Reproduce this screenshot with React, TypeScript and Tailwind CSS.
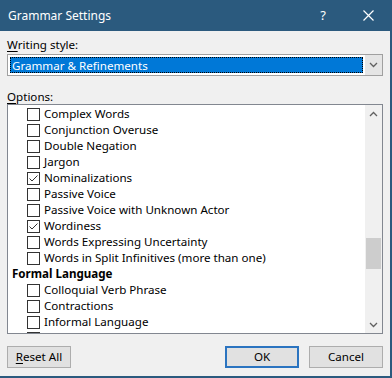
import React from 'react';

type Row = { label: string; checked?: boolean; heading?: boolean };

const rows: Row[] = [
  { label: 'Complex Words' },
  { label: 'Conjunction Overuse' },
  { label: 'Double Negation' },
  { label: 'Jargon' },
  { label: 'Nominalizations', checked: true },
  { label: 'Passive Voice' },
  { label: 'Passive Voice with Unknown Actor' },
  { label: 'Wordiness', checked: true },
  { label: 'Words Expressing Uncertainty' },
  { label: 'Words in Split Infinitives (more than one)' },
  { label: 'Formal Language', heading: true },
  { label: 'Colloquial Verb Phrase' },
  { label: 'Contractions' },
  { label: 'Informal Language' },
  { label: '' },
];

const Check: React.FC<{ checked?: boolean }> = ({ checked }) => (
  <span className="w-[13px] h-[13px] border border-[#333] bg-white flex items-center justify-center shrink-0">
    {checked && (
      <svg width="11" height="11" viewBox="0 0 11 11" fill="none">
        <path d="M1.5 5.5 L4 8 L9.5 2.5" stroke="#333" strokeWidth="1" />
      </svg>
    )}
  </span>
);

const Chevron: React.FC<{ up?: boolean }> = ({ up }) => (
  <svg width="9" height="6" viewBox="0 0 9 6" fill="none">
    <path d={up ? 'M1 5 L4.5 1.5 L8 5' : 'M1 1 L4.5 4.5 L8 1'} stroke="#606060" strokeWidth="1.3" />
  </svg>
);

const App: React.FC = () => {
  return (
    <div
      className="w-[392px] h-[378px] bg-[#2b5a7e] flex flex-col pr-[2px] pb-[2px] text-[11.6px] text-black"
      style={{ fontFamily: '"Segoe UI", "Noto Sans", sans-serif' }}
    >
      {/* title bar */}
      <div className="h-[31px] flex items-center text-white shrink-0">
        <span className="pl-[8px] text-[12px]">Grammar Settings</span>
        <span className="ml-auto w-[10px] text-center text-[13px] mr-[35px]">?</span>
        <svg width="11" height="11" viewBox="0 0 11 11" className="mr-[16px]">
          <path d="M0.5 0.5 L10.5 10.5 M10.5 0.5 L0.5 10.5" stroke="#fff" strokeWidth="1.2" />
        </svg>
      </div>

      <div className="flex-1 bg-[#f0f0f0] flex flex-col px-[7px]">
        <div className="pt-[6px] h-[23px] leading-[16px]">
          <span className="underline underline-offset-2">W</span>riting style:
        </div>
        <div className="h-[22px] border border-[#a0a0a0] bg-white flex">
          <div className="flex-1 p-[2px] flex">
            <div className="flex-1 bg-[#0078d7] border border-dotted border-black text-white pl-[1px] leading-[15px]">
              Grammar &amp; Refinements
            </div>
          </div>
          <div className="w-[17px] bg-[#e5e5e5] flex items-center justify-center">
            <Chevron />
          </div>
        </div>

        <div className="pt-[14px] h-[28px] leading-[14px]">
          <span className="underline underline-offset-2">O</span>ptions:
        </div>
        <div className="h-[230px] border border-[#828790] bg-white flex overflow-hidden">
          <div className="flex-1 pt-[1px] overflow-hidden">
            {rows.map((r, i) =>
              r.heading ? (
                <div key={i} className="h-[16px] flex items-center pl-[4px] font-bold">
                  {r.label}
                </div>
              ) : (
                <div key={i} className="h-[16px] flex items-center pl-[19px] gap-[4px] whitespace-nowrap">
                  <Check checked={r.checked} />
                  {r.label && <span>{r.label}</span>}
                </div>
              )
            )}
          </div>
          <div className="w-[17px] bg-[#f0f0f0] flex flex-col items-center">
            <div className="h-[17px] flex items-center justify-center">
              <Chevron up />
            </div>
            <div className="h-[116px]" />
            <div className="w-[15px] h-[31px] bg-[#cdcdcd]" />
            <div className="flex-1" />
            <div className="h-[17px] flex items-center justify-center">
              <Chevron />
            </div>
          </div>
        </div>

        <div className="flex items-start pt-[12px]">
          <button className="w-[64px] h-[22px] border border-[#adadad] bg-[#e1e1e1] leading-[20px]">
            <span className="underline underline-offset-2">R</span>eset All
          </button>
          <button className="ml-auto w-[74px] h-[22px] border-2 border-[#2b74c0] bg-[#e1e1e1] leading-[18px]">
            OK
          </button>
          <button className="ml-[10px] w-[74px] h-[22px] border border-[#adadad] bg-[#e1e1e1] leading-[20px]">
            Cancel
          </button>
        </div>
      </div>
    </div>
  );
};

export default App;
